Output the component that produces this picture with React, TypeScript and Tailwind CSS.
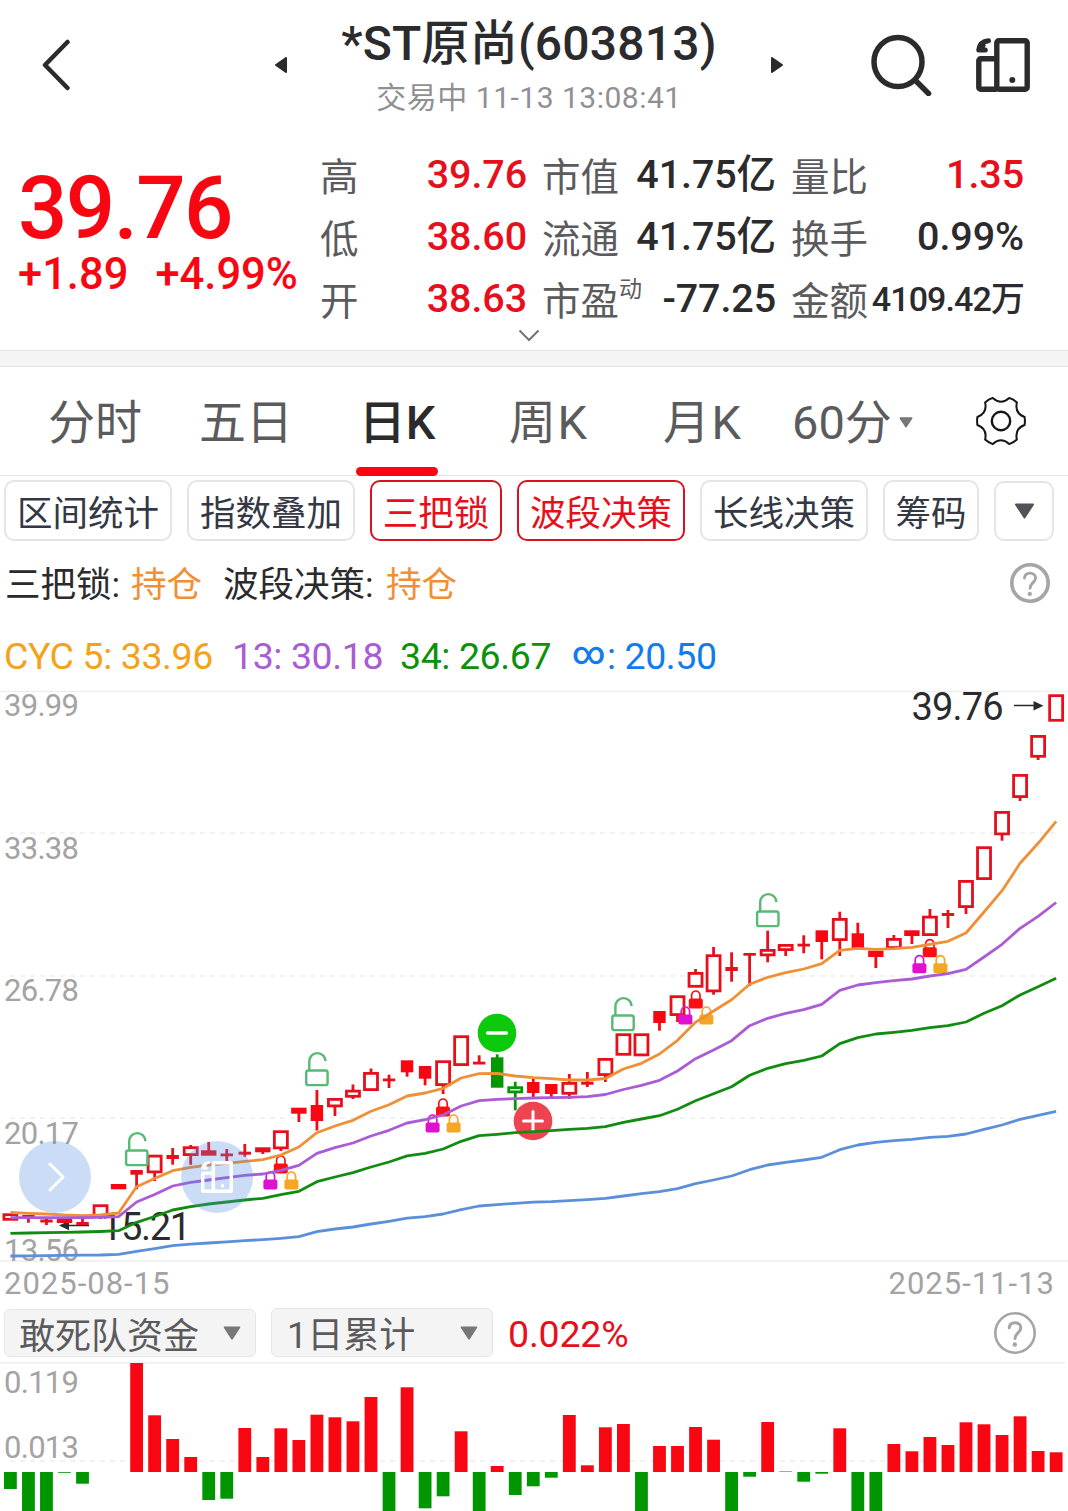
import { clsx } from 'clsx'

type Candle = {
  kind: 'hollow' | 'solid'
  top: number
  bottom: number
  high?: number
  low?: number
  wide?: boolean
  green?: boolean
}

const STEP = 18.03
const X0 = 10.4
const RED = '#e60f1b'
const GREEN = '#039703'

const xAt = (i: number) => X0 + i * STEP

const hollow = (top: number, bottom: number, high?: number, low?: number): Candle => ({
  kind: 'hollow',
  top,
  bottom,
  high,
  low,
})
const solid = (top: number, bottom: number, high?: number, low?: number): Candle => ({
  kind: 'solid',
  top,
  bottom,
  high,
  low,
})
const wide = (top: number, bottom: number, high?: number, low?: number): Candle => ({
  ...solid(top, bottom, high, low),
  wide: true,
})

const candles: Candle[] = [
  hollow(1213.3, 1220.7),
  solid(1215, 1219, 1215, 1222.7),
  solid(1219.5, 1222.5, 1218, 1225),
  wide(1219, 1223),
  solid(1222, 1225, 1219),
  hollow(1204.3, 1217, undefined, 1219),
  wide(1184, 1189.3),
  solid(1170, 1174.7, undefined, 1189.3),
  hollow(1154.7, 1173.3, undefined, 1181),
  solid(1155, 1159, 1148, 1164.7),
  hollow(1146.3, 1156, 1145, 1164.7),
  wide(1150.3, 1155.7, 1142),
  solid(1153.5, 1156.3, 1149, 1161),
  solid(1151.7, 1154.7, 1144, 1156.7),
  wide(1147.3, 1152.3, undefined, 1154),
  hollow(1130.3, 1149.3, undefined, 1151),
  wide(1107.7, 1113.7, undefined, 1122),
  solid(1105, 1121, 1090, 1130.5),
  hollow(1098, 1107.3, undefined, 1116),
  hollow(1089.7, 1097.7, 1084.5, 1099),
  hollow(1072, 1091, 1068.5),
  solid(1078.5, 1081.3, 1074.7, 1088),
  solid(1060.3, 1072.3, undefined, 1076.7),
  solid(1066, 1078.7, undefined, 1085.3),
  hollow(1060.3, 1086, undefined, 1094),
  hollow(1035.3, 1066),
  solid(1061.7, 1064.5, 1055.3),
  { ...solid(1057.3, 1087.7, 1054.3), green: true },
  { ...hollow(1086.3, 1093.3, 1081.7, 1110.3), green: true },
  solid(1082, 1093, 1078.7, 1099),
  solid(1084, 1094, undefined, 1099),
  hollow(1082, 1094.7, 1074, 1099),
  solid(1081.7, 1084.7, 1072, 1087),
  hollow(1058, 1076, undefined, 1082),
  hollow(1033.3, 1055.7),
  hollow(1033.3, 1056.3),
  solid(1011, 1023, undefined, 1030.7),
  hollow(995.3, 1016, undefined, 1022),
  hollow(972, 987.7, 969),
  hollow(954.3, 992.3, 947, 994.7),
  solid(967, 971, 952.3, 981.7),
  solid(953, 955.7, undefined, 986),
  hollow(949, 956.3, 930.7, 962.3),
  hollow(944, 951, undefined, 956),
  solid(943.7, 946.5, 935.3, 953.3),
  solid(930.3, 942, undefined, 959.3),
  hollow(918, 941, 911.7, 956),
  solid(933.3, 948, 922.7),
  wide(950.7, 957, undefined, 968),
  hollow(938, 949, 935),
  wide(930.3, 936, undefined, 944),
  hollow(915.7, 936, 909),
  solid(913, 916, 910, 928),
  hollow(880, 908, undefined, 914),
  hollow(846.3, 880),
  hollow(811, 835.3, undefined, 840.7),
  hollow(774, 798, undefined, 801),
  hollow(735, 757.7, undefined, 760),
  hollow(694.3, 721.7),
]

const lines = [
  {
    color: '#f08f35',
    ys: [
      1212.5, 1213.3, 1214, 1215, 1215.6, 1215, 1213, 1186.7, 1178.5, 1170.7, 1167.3, 1165, 1163.3,
      1161.3, 1159.7, 1155, 1147, 1132.7, 1126, 1120.3, 1111.3, 1104.7, 1096, 1093, 1088.3, 1078,
      1073.7, 1073.5, 1076, 1077.7, 1078.7, 1080, 1080, 1078.5, 1069, 1063.3, 1054, 1040.3, 1022.3,
      1011, 999.7, 984.3, 977.3, 972.7, 969, 963.7, 950.3, 948.3, 949.3, 948.7, 947.3, 944.3, 941.3,
      933, 912, 890.7, 863.3, 843.3, 821.3,
    ],
  },
  {
    color: '#aa5bd6',
    ys: [
      1217.7, 1217.7, 1217.7, 1217.7, 1217.7, 1217.3, 1216.7, 1202, 1194.5, 1186, 1182.3, 1180,
      1177.7, 1175.3, 1174, 1170.3, 1165.3, 1153.3, 1147.7, 1143, 1136, 1130.3, 1123, 1119.7, 1115,
      1106, 1100.7, 1099.3, 1098.7, 1098, 1097.7, 1097.3, 1096.7, 1094.5, 1089.5, 1085.3, 1080.3,
      1071, 1058.7, 1050, 1040.7, 1025.7, 1018.3, 1013.3, 1009.7, 1004.3, 990.3, 985, 982.7, 980.7,
      979, 976, 973.7, 969.3, 957, 944.3, 928.3, 916.3, 902.5,
    ],
  },
  {
    color: '#118c11',
    ys: [
      1233.3, 1233, 1232.6, 1232.3, 1232, 1231.5, 1230.7, 1222.3, 1216.5, 1210, 1206.7, 1204, 1202,
      1200, 1198.3, 1194.7, 1191.3, 1181.7, 1177, 1172.7, 1167, 1162, 1155.9, 1153.3, 1149, 1141.3,
      1135.7, 1134.3, 1132.7, 1131.7, 1130.7, 1129.3, 1128.3, 1126.7, 1122.3, 1119, 1115.7, 1109.3,
      1100.7, 1093.7, 1086.7, 1075.3, 1068.3, 1063.7, 1060.3, 1056, 1043.7, 1037.7, 1034, 1032.3,
      1030.3, 1027.7, 1025.7, 1022, 1013.3, 1005.7, 995, 986.7, 978.3,
    ],
  },
  {
    color: '#5b8fda',
    ys: [
      1256, 1255.8, 1255.6, 1255.4, 1255.2, 1255, 1254.4, 1251.3, 1248.6, 1245.7, 1244.2, 1243,
      1241.8, 1240.6, 1239.6, 1238.3, 1236.7, 1231.7, 1229, 1227, 1224, 1221.3, 1218.2, 1216.7,
      1214, 1209.7, 1206, 1204.7, 1203.3, 1202.2, 1201.7, 1200.7, 1199.7, 1198.3, 1196, 1193.7,
      1191.7, 1188.7, 1183.7, 1180, 1176, 1169.7, 1165, 1162.3, 1160, 1157.3, 1149.7, 1145, 1142.3,
      1140.7, 1139.3, 1137.3, 1136.3, 1134, 1129.3, 1125, 1119.3, 1115.3, 1111.3,
    ],
  },
]

// Positive values grow up from the zero line, negative ones hang below it.
const flows = [
  -17, -40, -40, -0.8, -11.7, 0, 0, 109, 56.7, 33, 15, -28, -26.7, 44, 15, 43.7, 32, 57.3, 54.7,
  50.7, 75, -40, 84.7, -36.3, -24.3, 40.7, -40, 6, -23, -14.3, -5.7, 57, 6.7, 44.7, 48, -40, 26, 26,
  45, 32.3, -40, -4.7, 50, 0.5, -9.7, -1.7, 43.7, -40, -40, 28, 20.7, 35, 27, 49.7, 47.7, 37, 55.7,
  21, 19.7,
]

const priceLabels = [
  { text: '39.99', y: 716 },
  { text: '33.38', y: 859 },
  { text: '26.78', y: 1001 },
  { text: '20.17', y: 1144 },
  { text: '13.56', y: 1260.7 },
]

const openLocks = [
  { x: 136.8, y: 1132.5 },
  { x: 316.9, y: 1052.5 },
  { x: 623, y: 997.5 },
  { x: 767.8, y: 893.5 },
]

const lockGroups = [
  { x: 280.8, y: 1155 },
  { x: 443, y: 1098 },
  { x: 695.8, y: 990 },
  { x: 929.8, y: 938.7 },
]

const chips = [
  { text: '区间统计', width: 'w-[168px]' },
  { text: '指数叠加', width: 'w-[168px]' },
  { text: '三把锁', width: 'w-[132px]', active: true },
  { text: '波段决策', width: 'w-[168px]', active: true },
  { text: '长线决策', width: 'w-[168px]' },
  { text: '筹码', width: 'w-[96px]' },
]

function CandleShape({ candle, x }: { candle: Candle; x: number }) {
  const { kind, top, bottom, high, low, green } = candle
  const color = green ? GREEN : kind === 'solid' && bottom - top > 5 ? '#f80612' : RED
  const w = candle.wide ? 15.4 : 12.4
  return (
    <g>
      {high !== undefined && <path d={`M${x} ${high}V${top + 1}`} stroke={color} strokeWidth="2.8" />}
      {low !== undefined && <path d={`M${x} ${bottom - 1}V${low}`} stroke={color} strokeWidth="2.8" />}
      {kind === 'hollow' ? (
        <rect
          x={x - 6.5}
          y={top + 1.4}
          width="13"
          height={bottom - top - 2.8}
          fill="#fff"
          stroke={color}
          strokeWidth="2.8"
        />
      ) : (
        <rect x={x - w / 2} y={top} width={w} height={bottom - top} fill={color} />
      )}
    </g>
  )
}

function OpenLock({ x, y }: { x: number; y: number }) {
  return (
    <g transform={`translate(${x} ${y})`} fill="none" stroke="#57b973" strokeWidth="2.4">
      <rect x="-10.7" y="18" width="21.4" height="14.6" rx="2.2" />
      <path d="M-7.6 18V9A8.15 8.15 0 0 1 8.7 8.6" />
    </g>
  )
}

function ClosedLock({ x, y, color }: { x: number; y: number; color: string }) {
  return (
    <g transform={`translate(${x} ${y})`}>
      <path d="M-4.2 10V5.2a4.2 4.2 0 0 1 8.4 0V10" fill="none" stroke={color} strokeWidth="1.7" />
      <rect x="-7" y="8.5" width="14" height="10" rx="2" fill={color} />
    </g>
  )
}

function FoldPhone({ className, bold }: { className: string; bold?: boolean }) {
  return (
    <svg viewBox="0 0 54 54" className={className} fill="none" stroke="currentColor">
      <g strokeWidth={bold ? 6 : 5.4} strokeLinejoin="round">
        <rect x="20.8" y="2.8" width="30.4" height="48.4" rx="2" />
        <path d="M20.8 20.8H4.6a1.8 1.8 0 0 0-1.8 1.8v26.8a1.8 1.8 0 0 0 1.8 1.8h16.2" />
      </g>
      <path
        d="M2.8 11.5C3.5 6.5 7 3.3 12.5 2.7M2.8 12L9.3 12M7 7.5L4 11"
        strokeWidth="5"
        strokeLinecap="round"
      />
      <circle cx="36.3" cy="42" r="3" fill="currentColor" stroke="none" />
    </svg>
  )
}

function Help({ className, stroke }: { className: string; stroke: number }) {
  return (
    <svg viewBox="0 0 42 42" className={className} fill="none" stroke="#a5a5a5">
      <circle cx="21" cy="21" r={21 - stroke / 2} strokeWidth={stroke} />
      <path
        d="M15.2 15.8c.3-3.3 2.7-5.1 5.8-5.1 3.4 0 5.8 2.2 5.8 5.2 0 4.5-5.8 5.1-5.8 10.6"
        strokeWidth="3"
        strokeLinecap="round"
      />
      <circle cx="20.8" cy="32.5" r="2.2" fill="#a5a5a5" stroke="none" />
    </svg>
  )
}

function Caret({ className }: { className: string }) {
  return (
    <svg viewBox="0 0 20 16" className={className}>
      <path
        d="M1.5 1.5h17L10 14.5z"
        fill="currentColor"
        stroke="currentColor"
        strokeWidth="2"
        strokeLinejoin="round"
      />
    </svg>
  )
}

function Header() {
  return (
    <header className="flex h-[130px] shrink-0 items-center text-[#2b2b2d]">
      <svg
        viewBox="0 0 28 52"
        className="ml-[42px] h-[52px] w-7"
        fill="none"
        stroke="currentColor"
        strokeWidth="4.5"
        strokeLinecap="round"
        strokeLinejoin="round"
      >
        <path d="M25.5 3L3 26l22.5 23" />
      </svg>
      <svg viewBox="0 0 12 16" className="ml-[205px] h-4 w-3">
        <path d="M11 1v14L1 8z" fill="currentColor" stroke="currentColor" strokeWidth="2" strokeLinejoin="round" />
      </svg>
      <div className="flex h-full w-[484px] flex-col items-center pt-[17px]">
        <h1 className="text-[48px] leading-[54px] font-[480] tracking-[0.2px] whitespace-nowrap">*ST原尚(603813)</h1>
        <p className="mt-[7px] text-[30px] leading-[40px] tracking-[0.5px] whitespace-nowrap text-[#909094]">
          交易中 11-13 13:08:41
        </p>
      </div>
      <svg viewBox="0 0 12 16" className="h-4 w-3">
        <path d="M1 1v14l10-7z" fill="currentColor" stroke="currentColor" strokeWidth="2" strokeLinejoin="round" />
      </svg>
      <svg
        viewBox="0 0 62 62"
        className="ml-[88px] h-[62px] w-[62px]"
        fill="none"
        stroke="currentColor"
        strokeWidth="5.5"
        strokeLinecap="round"
      >
        <ellipse cx="27" cy="28" rx="24" ry="24.5" />
        <path d="M45 47l12.5 12.5" />
      </svg>
      <FoldPhone className="ml-[43px] h-[54px] w-[54px]" />
    </header>
  )
}

type StatProps = {
  label: string
  value: string
  sup?: string
  red?: boolean
  small?: boolean
}

function Stat({ label, value, sup, red, small }: StatProps) {
  return (
    <div className="flex h-[62px] items-center justify-between">
      <span className="flex pt-[8px] text-[38.5px] text-[#5b5b5d]">
        {label}
        {sup && <sup className="top-[-12px] text-[23px] leading-[38px]">{sup}</sup>}
      </span>
      <span
        className={clsx(
          'pt-[2px] font-[480] whitespace-nowrap',
          small ? 'text-[34px] tracking-[-0.9px]' : 'text-[39.5px] tracking-[-0.1px]',
          red ? 'text-[#e60f1b]' : 'text-[#2b2b2d]',
        )}
      >
        {value}
      </span>
    </div>
  )
}

function Quote() {
  return (
    <section className="relative flex h-[221px] shrink-0 border-b border-[#e4e4e4] pt-[13px] leading-none">
      <div className="w-[320px] pt-[22px] pl-[18px] text-[#f80612]">
        <div className="text-[87px] leading-[86px] font-[480] tracking-[-1.6px]">39.76</div>
        <div className="flex gap-[27px] text-[43.5px] leading-[47px] font-[480] whitespace-nowrap">
          <span>+1.89</span>
          <span>+4.99%</span>
        </div>
      </div>
      <div className="w-[207px]">
        <Stat label="高" value="39.76" red />
        <Stat label="低" value="38.60" red />
        <Stat label="开" value="38.63" red />
      </div>
      <div className="ml-[15px] w-[234px]">
        <Stat label="市值" value="41.75亿" />
        <Stat label="流通" value="41.75亿" />
        <Stat label="市盈" sup="动" value="-77.25" />
      </div>
      <div className="ml-[15px] w-[233px]">
        <Stat label="量比" value="1.35" red />
        <Stat label="换手" value="0.99%" />
        <Stat label="金额" value="4109.42万" small />
      </div>
      <svg
        viewBox="0 0 22 13"
        className="absolute top-[199px] left-[518px] h-[13px] w-[22px]"
        fill="none"
        stroke="#77777a"
        strokeWidth="2.2"
      >
        <path d="M1.5 1.5L11 11l9.5-9.5" />
      </svg>
    </section>
  )
}

function Gear() {
  return (
    <svg
      viewBox="-26 -26 52 52"
      className="h-[52px] w-[52px]"
      fill="none"
      stroke="#161616"
      strokeWidth="2"
      strokeLinejoin="round"
    >
      <path d="M23.6-4Q24.2 0 23.6 4Q13.4 7.7 15.9 18.6Q12.5 21.8 8.2 23.1Q0 15.5-8.2 23.1Q-12.5 21.8-15.9 18.6Q-13.4 7.7-23.6 4Q-24.2 0-23.6-4Q-13.4-7.7-15.9-18.6Q-12.5-21.8-8.2-23.1Q0-15.5 8.2-23.1Q12.5-21.8 15.9-18.6Q13.4-7.7 23.6-4z" />
      <circle r="9.2" strokeWidth="2.4" />
    </svg>
  )
}

function Tabs() {
  return (
    <nav className="flex h-[109px] shrink-0 items-start border-b border-[#e4e4e4] text-[47px] leading-[112px] whitespace-nowrap text-[#5b5b5d]">
      <span className="ml-[48px] w-[151px]">分时</span>
      <span className="w-[157px]">五日</span>
      <span className="relative flex h-[109px] w-[82px] justify-center font-[480] text-[#2b2b2d]">
        日K
        <i className="absolute bottom-0 left-0 h-[9px] w-[82px] rounded-full bg-[#f80612]" />
      </span>
      <span className="ml-[71px] w-[154px] tracking-[1.5px]">周K</span>
      <span className="w-[129px] tracking-[1.5px]">月K</span>
      <span className="w-[106px]">60分</span>
      <Caret className="mt-[50px] h-[11px] w-[16px] text-[#777]" />
      <span className="mt-[28px] ml-[61px]">
        <Gear />
      </span>
    </nav>
  )
}

function Indicators() {
  return (
    <div className="shrink-0">
      <div className="flex h-[65px] items-end gap-x-[15px] pl-1 text-[35.5px] leading-none">
        {chips.map((chip) => (
          <span
            key={chip.text}
            className={clsx(
              'flex h-[61px] shrink-0 items-center justify-center rounded-[10px] border-2 pt-[8px] whitespace-nowrap',
              chip.width,
              chip.active ? 'border-[#d8131f] text-[#e60f1b]' : 'border-[#e5e5e5] text-[#343844]',
            )}
          >
            {chip.text}
          </span>
        ))}
        <span className="flex h-[60px] w-[60px] items-center justify-center rounded-[10px] border-2 border-[#e5e5e5]">
          <Caret className="h-4 w-[21px] text-[#515359]" />
        </span>
      </div>
      <div className="flex h-[84px] items-center pl-[5px] text-[35.5px] leading-none whitespace-nowrap text-[#2b2b2d]">
        <span className="w-[126px] pt-[6px]">三把锁:</span>
        <span className="w-[92px] pt-[6px] text-[#f08f35]">持仓</span>
        <span className="w-[163px] pt-[6px]">波段决策:</span>
        <span className="pt-[6px] text-[#f08f35]">持仓</span>
        <Help className="mr-[18px] ml-auto h-10 w-10" stroke={3.8} />
      </div>
      <div className="flex h-[60px] items-center pt-[3px] pl-1 text-[37.5px] leading-none tracking-[-0.4px] whitespace-nowrap">
        <span className="w-[228px] text-[#f5a21b]">CYC 5: 33.96</span>
        <span className="w-[168px] text-[#aa5bd6]">13: 30.18</span>
        <span className="w-[172px] text-[#0c910c]">34: 26.67</span>
        <span className="flex items-center text-[#147bea]">
          <span className="mr-0.5 pb-[8px] text-[32px] font-medium">∞</span>
          <span>: 20.50</span>
        </span>
      </div>
    </div>
  )
}

function KLineChart() {
  return (
    <div className="relative h-[581px] shrink-0">
      <svg viewBox="0 685 1068 581" className="block h-[581px] w-full overflow-visible">
        <g stroke="#eeeeee" strokeWidth="1.5">
          <path d="M0 691.5H1068M0 1261H1068" />
          <path d="M10 833H1058M10 976H1058M10 1118H1058" strokeDasharray="5 5" />
        </g>
        <g fill="#a3a3a3" fontSize="31">
          {priceLabels.map((label) => (
            <text key={label.text} x="4" y={label.y} textLength="75">
              {label.text}
            </text>
          ))}
        </g>
        <g fill="#2b2b2d" fontSize="38">
          <text x="911.5" y="719.5" textLength="92">
            39.76
          </text>
          <text x="101" y="1240" textLength="90">
            15.21
          </text>
          <path d="M1014 705.5h22M66 1225.5h23" stroke="#2b2b2d" strokeWidth="1.3" />
          <path d="M1033.5 701v9.5l10-4.75zM69 1220.8v9.5l-10-4.75z" />
        </g>
        {candles.map((candle, i) => (
          <CandleShape key={i} candle={candle} x={xAt(i)} />
        ))}
        {openLocks.map((lock) => (
          <OpenLock key={lock.x} {...lock} />
        ))}
        {lockGroups.map(({ x, y }) => (
          <g key={x}>
            <ClosedLock x={x} y={y} color="#fa1010" />
            <ClosedLock x={x - 10.4} y={y + 16} color="#e010d0" />
            <ClosedLock x={x + 10.6} y={y + 16} color="#f5a623" />
          </g>
        ))}
        <circle cx="533" cy="1121" r="19.3" fill="#ee4350" />
        <path d="M533 1111.5v19M523.5 1121h19" stroke="#fff" strokeWidth="3" strokeLinecap="round" />
        {lines.map((line) => (
          <polyline
            key={line.color}
            points={line.ys.map((y, i) => `${xAt(i)},${y}`).join(' ')}
            fill="none"
            stroke={line.color}
            strokeWidth="2.8"
            strokeLinejoin="round"
          />
        ))}
        <circle cx="497" cy="1033" r="19.3" fill="#0bc90b" />
        <path d="M487.5 1033h19" stroke="#fff" strokeWidth="3.3" strokeLinecap="round" />
      </svg>
      <button className="absolute top-[456px] left-[19px] flex h-[72px] w-[72px] items-center justify-center rounded-full bg-[#528be1]/30">
        <svg
          viewBox="0 0 18 30"
          className="ml-1 h-[30px] w-[18px]"
          fill="none"
          stroke="#fff"
          strokeWidth="3"
          strokeLinecap="round"
          strokeLinejoin="round"
        >
          <path d="M2 2l13 13L2 28" />
        </svg>
      </button>
      <button className="absolute top-[456px] left-[181px] flex h-[72px] w-[72px] items-center justify-center rounded-full bg-[#528be1]/30 text-white">
        <FoldPhone className="h-[32px] w-[32px]" bold />
      </button>
    </div>
  )
}

function FundFlow() {
  return (
    <section className="flex flex-1 flex-col">
      <div className="flex h-[34px] items-center justify-between pr-[13px] pl-1 text-[31px] leading-none tracking-[1px] text-[#a3a3a3]">
        <span>2025-08-15</span>
        <span>2025-11-13</span>
      </div>
      <div className="mt-2 flex h-[49px] items-end pl-1 text-[36px] leading-none whitespace-nowrap text-[#5b5b5d]">
        <div className="flex h-[48px] w-[252px] items-center justify-between rounded-md border border-[#e6e6e6] bg-[#f4f4f4] pr-[14px] pl-[14px]">
          <span className="pt-[7px]">敢死队资金</span>
          <Caret className="h-[14px] w-[18px] text-[#777]" />
        </div>
        <div className="ml-[15px] flex h-[49px] w-[222px] items-center justify-between rounded-md border border-[#e6e6e6] bg-[#f4f4f4] pr-[14px] pl-[15px]">
          <span className="pt-[6px]">1日累计</span>
          <Caret className="h-[14px] w-[18px] text-[#777]" />
        </div>
        <span className="ml-[15px] flex h-[47px] items-center pt-[2px] text-[37.5px] tracking-[-0.2px] text-[#e60f1b]">
          0.022%
        </span>
        <Help className="mr-8 mb-[3px] ml-auto h-[42px] w-[42px]" stroke={2.6} />
      </div>
      <svg viewBox="0 1357 1068 154" className="block h-[154px] w-full">
        <path d="M0 1362.7H1065" stroke="#eeeeee" strokeWidth="1.5" />
        <path d="M10 1461H1058" stroke="#eeeeee" strokeWidth="1.5" strokeDasharray="5 5" />
        <g fill="#a3a3a3" fontSize="31">
          <text x="4" y="1393.3" textLength="75">
            0.119
          </text>
          <text x="4" y="1458.3" textLength="75">
            0.013
          </text>
        </g>
        {flows.map((v, i) => (
          <rect
            key={i}
            x={xAt(i) - 6.4}
            y={v > 0 ? 1472 - v : 1472}
            width="12.8"
            height={Math.abs(v)}
            fill={v > 0 ? '#f80612' : '#009600'}
          />
        ))}
      </svg>
    </section>
  )
}

function App() {
  return (
    <div className="flex h-[1511px] w-[1068px] flex-col overflow-hidden bg-white font-[Roboto,'Noto_Sans_CJK_SC',sans-serif]">
      <Header />
      <Quote />
      <div className="h-[16px] shrink-0 border-b border-[#e4e4e4] bg-[#f4f4f4]" />
      <Tabs />
      <Indicators />
      <KLineChart />
      <FundFlow />
    </div>
  )
}

export default App
